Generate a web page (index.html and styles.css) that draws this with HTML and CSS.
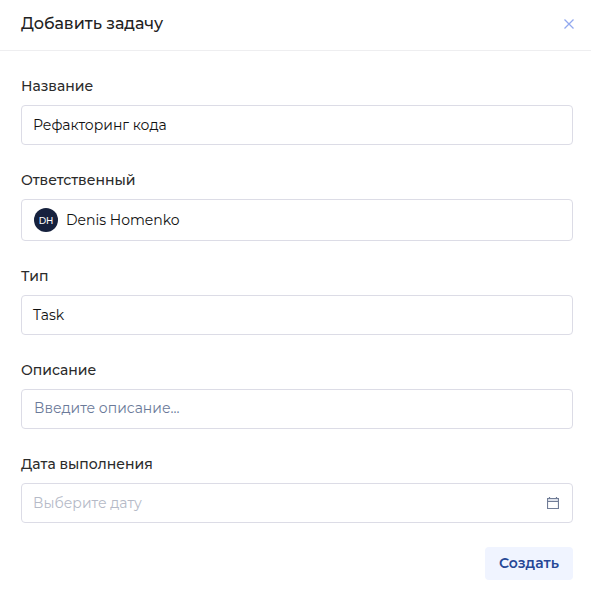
FILE: index.html
```html
<!DOCTYPE html>
<html lang="ru">
<head>
<meta charset="utf-8">
<title>Добавить задачу</title>
<link rel="stylesheet" href="styles.css">
</head>
<body>
<main class="dialog">
  <header class="header">
    <h1 class="title">Добавить задачу</h1>
    <svg class="close" viewBox="0 0 10 10"><path d="M.5.5l9 9M9.5.5l-9 9"/></svg>
  </header>
  <form class="form">
    <div class="field">
      <div class="label">Название</div>
      <div class="control">Рефакторинг кода</div>
    </div>
    <div class="field">
      <div class="label">Ответственный</div>
      <div class="control person"><span class="avatar">DH</span><span>Denis Homenko</span></div>
    </div>
    <div class="field">
      <div class="label">Тип</div>
      <div class="control">Task</div>
    </div>
    <div class="field">
      <div class="label">Описание</div>
      <div class="control editor">Введите описание...</div>
    </div>
    <div class="field">
      <div class="label">Дата выполнения</div>
      <div class="control date"><span>Выберите дату</span>
        <svg class="calendar" viewBox="0 0 12 12"><path class="band" d="M1 2h10v2H1z"/><path d="M.5 1.5h11v10H.5zM.5 4.5h11M2.5 0v2M9.5 0v2"/></svg>
      </div>
    </div>
    <div class="actions"><button class="submit" type="button">Создать</button></div>
  </form>
</main>
</body>
</html>
```

FILE: styles.css
```css
* { box-sizing: border-box; }
body { margin: 0; background: #fff; color: #2b2b2b; font-family: Montserrat, Inter, sans-serif; font-size: 14px; }
.dialog { height: 602px; overflow: hidden; }
.header { height: 51px; display: flex; align-items: center; justify-content: space-between; padding: 0 17px 2px 21px; border-bottom: 1px solid #eeeef0; }
.title { margin: 0; font-size: 16px; line-height: 24px; font-weight: 500; color: #222; white-space: nowrap; }
.close { width: 10px; height: 10px; fill: none; stroke: #92a9ef; stroke-width: 1.3; }
.form { padding: 25px 18px 0 21px; }
.field { margin-bottom: 25px; }
.label { height: 20px; line-height: 20px; margin-bottom: 9px; font-weight: 500; }
.control { height: 40px; display: flex; align-items: center; padding: 0 12px 0 11px; border: 1px solid #dcdce6; border-radius: 4px; color: #111; white-space: nowrap; }
.person { height: 42px; padding-left: 12px; }
.avatar { width: 24px; height: 24px; margin-right: 8px; border-radius: 50%; background: #16213d; color: #fff; font-size: 9px; font-weight: 500; line-height: 25px; text-align: center; }
.editor { padding: 0 12px 2px; color: #6b7a99; }
.date { justify-content: space-between; color: #b5bac7; }
.calendar { width: 12px; height: 12px; margin-right: 1px; fill: none; stroke: #717d97; stroke-width: 1.2; }
.calendar .band { fill: #dfe3ec; stroke: none; }
.actions { display: flex; justify-content: flex-end; margin-top: -1px; }
.submit { width: 88px; height: 33px; padding: 0; border: 0; border-radius: 4px; background: #f0f4ff; color: #264796; font: 600 14px/33px Montserrat, Inter, sans-serif; }
```
